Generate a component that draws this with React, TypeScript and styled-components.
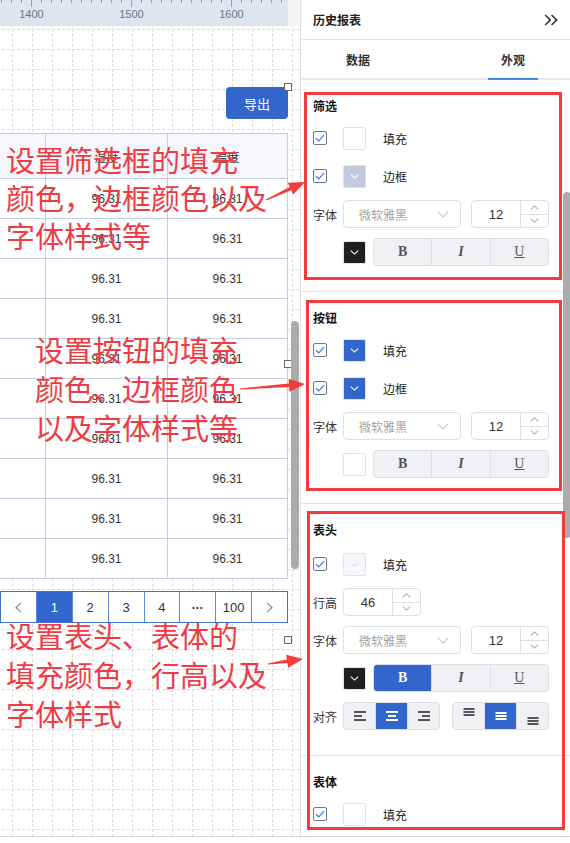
import React from "react";
import styled, { createGlobalStyle } from "styled-components";

const GlobalStyle = createGlobalStyle`
  html, body { margin: 0; padding: 0; background: #fff; }
  body { font-family: "Liberation Sans", "Noto Sans CJK SC", sans-serif; color: #333; }
  * { box-sizing: border-box; }
`;

const gridTile = encodeURIComponent(
  `<svg xmlns='http://www.w3.org/2000/svg' width='20' height='20'><path d='M0.5 0V20' stroke='#dcdcdc' stroke-dasharray='3 2'/><path d='M0 0.5H20' stroke='#dcdcdc' stroke-dasharray='3 2'/></svg>`
);

const Root = styled.div`
  position: relative;
  width: 570px;
  height: 843px;
  overflow: hidden;
  display: flex;
  flex-direction: column;
  background: #fff;
`;

const Main = styled.div`
  display: flex;
  height: 836px;
  flex: none;
  overflow: hidden;
`;

const BottomBar = styled.div`
  flex: 1;
  border-top: 1px solid #d6d6d6;
  background: #fff;
`;

/* ---------- canvas ---------- */
const Canvas = styled.div`
  position: relative;
  width: 300px;
  flex: none;
  display: flex;
  flex-direction: column;
  overflow: hidden;
`;

const RulerRow = styled.div`
  display: flex;
  height: 26px;
  flex: none;
`;

const RulerStrip = styled.div`
  width: 288px;
  background: #e1e5f0;
  display: flex;
`;

const RulerCorner = styled.div`
  flex: 1;
  background: #f3f3f5;
`;

const CanvasBody = styled.div`
  flex: 1;
  background: #fff url("data:image/svg+xml,${gridTile}") 12px 3px repeat;
  padding-top: 61px;
  display: flex;
  flex-direction: column;
`;

const ExportRow = styled.div`
  display: flex;
  justify-content: flex-end;
  padding-right: 12px;
`;

const ExportButton = styled.button`
  width: 62px;
  height: 32px;
  border: none;
  border-radius: 4px;
  background: #3366cc;
  color: #fff;
  font-size: 13px;
  font-family: "Noto Sans CJK SC", sans-serif;
  padding: 0;
`;

const DataTable = styled.div`
  align-self: flex-start;
  margin: 14px 0 0 -77px;
  display: grid;
  grid-template-columns: 122px 122px 120px;
  border-top: 1px solid #c5cde0;
  border-left: 1px solid #c5cde0;
  background: #fff;
`;

const Cell = styled.div<{ $head?: boolean }>`
  height: ${(p) => (p.$head ? 45 : 40)}px;
  border-right: 1px solid #c5cde0;
  border-bottom: 1px solid #c5cde0;
  background: ${(p) => (p.$head ? "#f5f7fd" : "#fff")};
  display: flex;
  align-items: center;
  justify-content: center;
  font-size: 12px;
  color: #333;
`;

const Pager = styled.div`
  align-self: flex-start;
  margin-top: 12px;
  display: flex;
  width: 288px;
  height: 32px;
  border: 1px solid #3f70d8;
  background: #fff;
`;

const PageCell = styled.div<{ $active?: boolean }>`
  flex: 1;
  display: flex;
  align-items: center;
  justify-content: center;
  font-size: 13px;
  color: ${(p) => (p.$active ? "#fff" : "#333")};
  background: ${(p) => (p.$active ? "#3366cc" : "#fff")};
  & + & {
    border-left: 1px solid #5a86e0;
  }
`;

const Dots = styled.span`
  font-size: 8px;
  letter-spacing: 1px;
  color: #333;
`;

const Handle = styled.div<{ $x: number; $y: number }>`
  position: absolute;
  left: ${(p) => p.$x}px;
  top: ${(p) => p.$y}px;
  width: 8px;
  height: 8px;
  border: 1.5px solid #666;
  background: #fff;
`;

const Thumb = styled.div<{ $x: number; $y: number; $h: number }>`
  position: absolute;
  left: ${(p) => p.$x}px;
  top: ${(p) => p.$y}px;
  width: 8px;
  height: ${(p) => p.$h}px;
  border-radius: 4px;
  background: #ababab;
`;

/* ---------- panel ---------- */
const Panel = styled.div`
  position: relative;
  flex: 1;
  border-left: 1px solid #dedede;
  display: flex;
  flex-direction: column;
  overflow: hidden;
  font-family: "Liberation Sans", "Noto Sans CJK SC", sans-serif;
`;

const PanelHeader = styled.div`
  height: 40px;
  flex: none;
  display: flex;
  align-items: center;
  justify-content: space-between;
  padding: 0 12px 0 12px;
  border-bottom: 1px solid #e4e4e4;
  font-size: 12px;
  font-weight: 600;
  color: #222;
`;

const TabBar = styled.div`
  height: 40px;
  flex: none;
  display: flex;
  gap: 105px;
  padding-left: 32px;
  border-bottom: 2px solid #e5e7eb;
`;

const Tab = styled.div<{ $active?: boolean }>`
  width: 50px;
  height: 40px;
  margin-bottom: -2px;
  display: flex;
  align-items: center;
  justify-content: center;
  font-size: 12px;
  font-weight: 600;
  color: #333;
  border-bottom: 2px solid ${(p) => (p.$active ? "#3d8ee6" : "transparent")};
`;

const Section = styled.div`
  flex: none;
  padding: 17px 21px 25px 12px;
  border-bottom: 1px solid #e2e2e2;
`;

const SectionTitle = styled.div<{ $gap?: number }>`
  font-size: 12px;
  font-weight: 600;
  line-height: 20px;
  margin-bottom: ${(p) => p.$gap ?? 7}px;
  color: #111;
`;

const Rows = styled.div`
  display: flex;
  flex-direction: column;
  gap: 10px;
`;

const Row = styled.div`
  display: flex;
  align-items: center;
  height: 28px;
`;

const Lead = styled.div`
  width: 30px;
  flex: none;
  font-size: 12px;
  color: #333;
  display: flex;
  align-items: center;
`;

const CheckBox = styled.div`
  width: 14px;
  height: 14px;
  border: 1px solid #6b7691;
  border-radius: 2px;
  background: #fff;
  display: flex;
  align-items: center;
  justify-content: center;
`;

const Swatch = styled.div<{ $fill: string }>`
  width: 23px;
  height: 23px;
  flex: none;
  border: 1px solid #e1e3e8;
  border-radius: 2px;
  background: ${(p) => p.$fill};
  display: flex;
  align-items: center;
  justify-content: center;
`;

const FieldLabel = styled.div`
  margin-left: 17px;
  font-size: 12px;
  color: #222;
`;

const Select = styled.div`
  width: 118px;
  height: 28px;
  margin-right: 10px;
  flex: none;
  border: 1px solid #dcdfe6;
  border-radius: 4px;
  background: #fff;
  display: flex;
  align-items: center;
  justify-content: space-between;
  padding: 0 11px 0 15px;
  font-size: 12px;
  color: #a3a3a3;
`;

const NumberBox = styled.div`
  width: 78px;
  height: 28px;
  flex: none;
  border: 1px solid #dcdfe6;
  border-radius: 4px;
  background: #fff;
  display: flex;
`;

const NumberValue = styled.div`
  flex: 1;
  display: flex;
  align-items: center;
  justify-content: center;
  font-size: 13px;
  color: #333;
`;

const Spinner = styled.div`
  width: 28px;
  border-left: 1px solid #dcdfe6;
  display: flex;
  flex-direction: column;
`;

const SpinBtn = styled.div`
  flex: 1;
  display: flex;
  align-items: center;
  justify-content: center;
  & + & {
    border-top: 1px solid #dcdfe6;
  }
`;

const SegGroup = styled.div<{ $w: number; $ml?: number }>`
  width: ${(p) => p.$w}px;
  margin-left: ${(p) => p.$ml ?? 0}px;
  height: 28px;
  flex: none;
  display: flex;
  border: 1px solid #dcdfe6;
  border-radius: 4px;
  overflow: hidden;
  background: #f0f1f4;
`;

const Seg = styled.div<{ $active?: boolean }>`
  flex: 1;
  display: flex;
  align-items: center;
  justify-content: center;
  background: ${(p) => (p.$active ? "#3366cc" : "transparent")};
  color: ${(p) => (p.$active ? "#fff" : "#555")};
  & + & {
    border-left: 1px solid #dcdfe6;
  }
`;

const StyleLetter = styled.span<{ $kind: "b" | "i" | "u" }>`
  font-family: "Liberation Serif", "DejaVu Serif", serif;
  font-size: 14px;
  font-weight: ${(p) => (p.$kind === "u" ? 400 : 700)};
  font-style: ${(p) => (p.$kind === "i" ? "italic" : "normal")};
  text-decoration: ${(p) => (p.$kind === "u" ? "underline" : "none")};
`;

/* ---------- annotation overlays ---------- */
const Note = styled.div<{ $x: number; $y: number; $lh: number }>`
  position: absolute;
  left: ${(p) => p.$x}px;
  top: ${(p) => p.$y}px;
  font-family: "Noto Sans CJK SC", sans-serif;
  font-size: 29px;
  line-height: ${(p) => p.$lh}px;
  color: #f03a44;
  white-space: pre;
  pointer-events: none;
`;

const Callout = styled.div<{ $x: number; $y: number; $w: number; $h: number }>`
  position: absolute;
  left: ${(p) => p.$x}px;
  top: ${(p) => p.$y}px;
  width: ${(p) => p.$w}px;
  height: ${(p) => p.$h}px;
  border: 3px solid #f43b3b;
  pointer-events: none;
`;

const ArrowLayer = styled.svg`
  position: absolute;
  left: 0;
  top: 0;
  pointer-events: none;
`;

/* ---------- small drawings ---------- */
const Check = () => (
  <svg width="10" height="8" viewBox="0 0 10 8">
    <path d="M1 4.2 L3.8 6.8 L9 1.2" fill="none" stroke="#3c7ae4" strokeWidth="1.2" />
  </svg>
);

const SmallChevron = ({ color, up }: { color: string; up?: boolean }) => (
  <svg width="9" height="5" viewBox="0 0 9 5">
    <path d={up ? "M0.8 4.4 L4.5 0.9 L8.2 4.4" : "M0.8 0.6 L4.5 4.1 L8.2 0.6"} fill="none" stroke={color} strokeWidth="1.1" />
  </svg>
);

const SelectChevron = () => (
  <svg width="12" height="7" viewBox="0 0 12 7">
    <path d="M0.7 0.7 L6 6 L11.3 0.7" fill="none" stroke="#c4c7ce" strokeWidth="1.1" />
  </svg>
);

const DoubleChevron = () => (
  <svg width="14" height="12" viewBox="0 0 14 12">
    <path d="M1.2 1 L6.2 6 L1.2 11 M7.6 1 L12.6 6 L7.6 11" fill="none" stroke="#333" strokeWidth="1.7" />
  </svg>
);

const PagerChevron = ({ right }: { right?: boolean }) => (
  <svg width="7" height="11" viewBox="0 0 7 11">
    <path d={right ? "M1 0.8 L6 5.5 L1 10.2" : "M6 0.8 L1 5.5 L6 10.2"} fill="none" stroke="#8a8a8a" strokeWidth="1.1" />
  </svg>
);

const HAlignIcon = ({ mode, color }: { mode: "l" | "c" | "r"; color: string }) => {
  const rows = [{ w: 12 }, { w: 8 }, { w: 12 }];
  return (
    <svg width="12" height="10" viewBox="0 0 12 10">
      {rows.map((r, i) => {
        const x = mode === "l" ? 0 : mode === "r" ? 12 - r.w : (12 - r.w) / 2;
        return <rect key={i} x={x} y={i * 4} width={r.w} height="2" fill={color} />;
      })}
    </svg>
  );
};

const VAlignIcon = ({ mode, color }: { mode: "t" | "m" | "b"; color: string }) => {
  const base = mode === "t" ? 2 : mode === "m" ? 6 : 11;
  return (
    <svg width="12" height="20" viewBox="0 0 12 20">
      {[0, 1, 2].map((i) => (
        <rect key={i} x="0.5" y={base + i * 3} width="11" height="2" fill={color} />
      ))}
    </svg>
  );
};

const arrow = (tx: number, ty: number, px: number, py: number) => {
  const dx = px - tx;
  const dy = py - ty;
  const len = Math.hypot(dx, dy);
  const ux = dx / len;
  const uy = dy / len;
  const nx = -uy;
  const ny = ux;
  const bx = px - ux * 16;
  const by = py - uy * 16;
  const pts = [
    [tx + nx * 0.6, ty + ny * 0.6],
    [bx + nx * 1.8, by + ny * 1.8],
    [bx + nx * 6.5, by + ny * 6.5],
    [px, py],
    [bx - nx * 6.5, by - ny * 6.5],
    [bx - nx * 1.8, by - ny * 1.8],
    [tx - nx * 0.6, ty - ny * 0.6],
  ];
  return pts.map((p) => p.join(",")).join(" ");
};

/* ---------- composed parts ---------- */
const ColorSwatch = ({ fill, arrowColor = "#fff" }: { fill: string; arrowColor?: string }) => (
  <Swatch $fill={fill}>
    <SmallChevron color={arrowColor} />
  </Swatch>
);

const CheckRow = ({ fill, label, arrowColor }: { fill: string; label: string; arrowColor?: string }) => (
  <Row>
    <Lead>
      <CheckBox>
        <Check />
      </CheckBox>
    </Lead>
    <ColorSwatch fill={fill} arrowColor={arrowColor} />
    <FieldLabel>{label}</FieldLabel>
  </Row>
);

const NumberField = ({ value }: { value: string }) => (
  <NumberBox>
    <NumberValue>{value}</NumberValue>
    <Spinner>
      <SpinBtn>
        <SmallChevron color="#a9adb6" up />
      </SpinBtn>
      <SpinBtn>
        <SmallChevron color="#a9adb6" />
      </SpinBtn>
    </Spinner>
  </NumberBox>
);

const FontRow = () => (
  <Row>
    <Lead>字体</Lead>
    <Select>
      <span>微软雅黑</span>
      <SelectChevron />
    </Select>
    <NumberField value="12" />
  </Row>
);

const StyleRow = ({ fill, bold }: { fill: string; bold?: boolean }) => (
  <Row>
    <Lead />
    <ColorSwatch fill={fill} />
    <SegGroup $w={176} $ml={7}>
      <Seg $active={bold}>
        <StyleLetter $kind="b">B</StyleLetter>
      </Seg>
      <Seg>
        <StyleLetter $kind="i">I</StyleLetter>
      </Seg>
      <Seg>
        <StyleLetter $kind="u">U</StyleLetter>
      </Seg>
    </SegGroup>
  </Row>
);

const rowsData = Array.from({ length: 10 }, () => ["", "96.31", "96.31"]);
const pages = ["<", "1", "2", "3", "4", "...", "100", ">"];

export default function App() {
  return (
    <Root>
      <GlobalStyle />
      <Main>
        <Canvas>
          <RulerRow>
            <RulerStrip>
              <svg width="288" height="26">
                {Array.from({ length: 29 }, (_, i) => {
                  const x = 1.5 + i * 10;
                  const major = (i - 3) % 10 === 0;
                  return <line key={i} x1={x} x2={x} y1={0} y2={major ? 7 : 3} stroke="#9a9daa" strokeWidth="1" />;
                })}
                {[1400, 1500, 1600].map((v, i) => (
                  <text key={v} x={31.5 + i * 100} y={18} textAnchor="middle" fontSize="11" fill="#6d7080" fontFamily="Liberation Sans, sans-serif">
                    {v}
                  </text>
                ))}
              </svg>
            </RulerStrip>
            <RulerCorner />
          </RulerRow>
          <CanvasBody>
            <ExportRow>
              <ExportButton>导出</ExportButton>
            </ExportRow>
            <DataTable>
              <Cell $head />
              <Cell $head>湿度</Cell>
              <Cell $head>温度</Cell>
              {rowsData.map((r, i) =>
                r.map((c, j) => <Cell key={`${i}-${j}`}>{c}</Cell>)
              )}
            </DataTable>
            <Pager>
              {pages.map((p, i) => (
                <PageCell key={i} $active={p === "1"}>
                  {p === "<" ? <PagerChevron /> : p === ">" ? <PagerChevron right /> : p === "..." ? <Dots>•••</Dots> : p}
                </PageCell>
              ))}
            </Pager>
          </CanvasBody>
          <Handle $x={284} $y={83} />
          <Handle $x={284} $y={360} />
          <Handle $x={284} $y={636} />
          <Thumb $x={291} $y={321} $h={248} />
        </Canvas>

        <Panel>
          <PanelHeader>
            <span>历史报表</span>
            <DoubleChevron />
          </PanelHeader>
          <TabBar>
            <Tab>数据</Tab>
            <Tab $active>外观</Tab>
          </TabBar>

          <Section>
            <SectionTitle>筛选</SectionTitle>
            <Rows>
              <CheckRow fill="#fff" label="填充" />
              <CheckRow fill="#c1cade" label="边框" />
              <FontRow />
              <StyleRow fill="#1f1f1f" />
            </Rows>
          </Section>

          <Section>
            <SectionTitle>按钮</SectionTitle>
            <Rows>
              <CheckRow fill="#3366cc" label="填充" />
              <CheckRow fill="#3366cc" label="边框" />
              <FontRow />
              <StyleRow fill="#fff" />
            </Rows>
          </Section>

          <Section>
            <SectionTitle $gap={9}>表头</SectionTitle>
            <Rows>
              <CheckRow fill="#f5f7fd" label="填充" arrowColor="#dde1ec" />
              <Row>
                <Lead>行高</Lead>
                <NumberField value="46" />
              </Row>
              <FontRow />
              <StyleRow fill="#1f1f1f" bold />
              <Row>
                <Lead>对齐</Lead>
                <SegGroup $w={97}>
                  <Seg>
                    <HAlignIcon mode="l" color="#555" />
                  </Seg>
                  <Seg $active>
                    <HAlignIcon mode="c" color="#fff" />
                  </Seg>
                  <Seg>
                    <HAlignIcon mode="r" color="#555" />
                  </Seg>
                </SegGroup>
                <SegGroup $w={97} $ml={12}>
                  <Seg>
                    <VAlignIcon mode="t" color="#555" />
                  </Seg>
                  <Seg $active>
                    <VAlignIcon mode="m" color="#fff" />
                  </Seg>
                  <Seg>
                    <VAlignIcon mode="b" color="#555" />
                  </Seg>
                </SegGroup>
              </Row>
            </Rows>
          </Section>

          <Section>
            <SectionTitle>表体</SectionTitle>
            <Rows>
              <CheckRow fill="#fff" label="填充" />
            </Rows>
          </Section>

          <Thumb $x={262} $y={192} $h={346} />
        </Panel>
      </Main>
      <BottomBar />

      <Note $x={6} $y={140} $lh={38}>{"设置筛选框的填充\n颜色，边框颜色以及\n字体样式等"}</Note>
      <Note $x={35} $y={330} $lh={39}>{"设置按钮的填充\n颜色、边框颜色\n以及字体样式等"}</Note>
      <Note $x={6} $y={616} $lh={39}>{"设置表头、表体的\n填充颜色，行高以及\n字体样式"}</Note>

      <Callout $x={304} $y={92} $w={258} $h={188} />
      <Callout $x={306} $y={300} $w={256} $h={191} />
      <Callout $x={307} $y={511} $w={258} $h={319} />

      <ArrowLayer width="570" height="843">
        <polygon points={arrow(266, 200, 305, 182)} fill="#f23c3c" />
        <polygon points={arrow(240, 389, 305, 384)} fill="#f23c3c" />
        <polygon points={arrow(268, 664, 303, 659)} fill="#f23c3c" />
      </ArrowLayer>
    </Root>
  );
}
